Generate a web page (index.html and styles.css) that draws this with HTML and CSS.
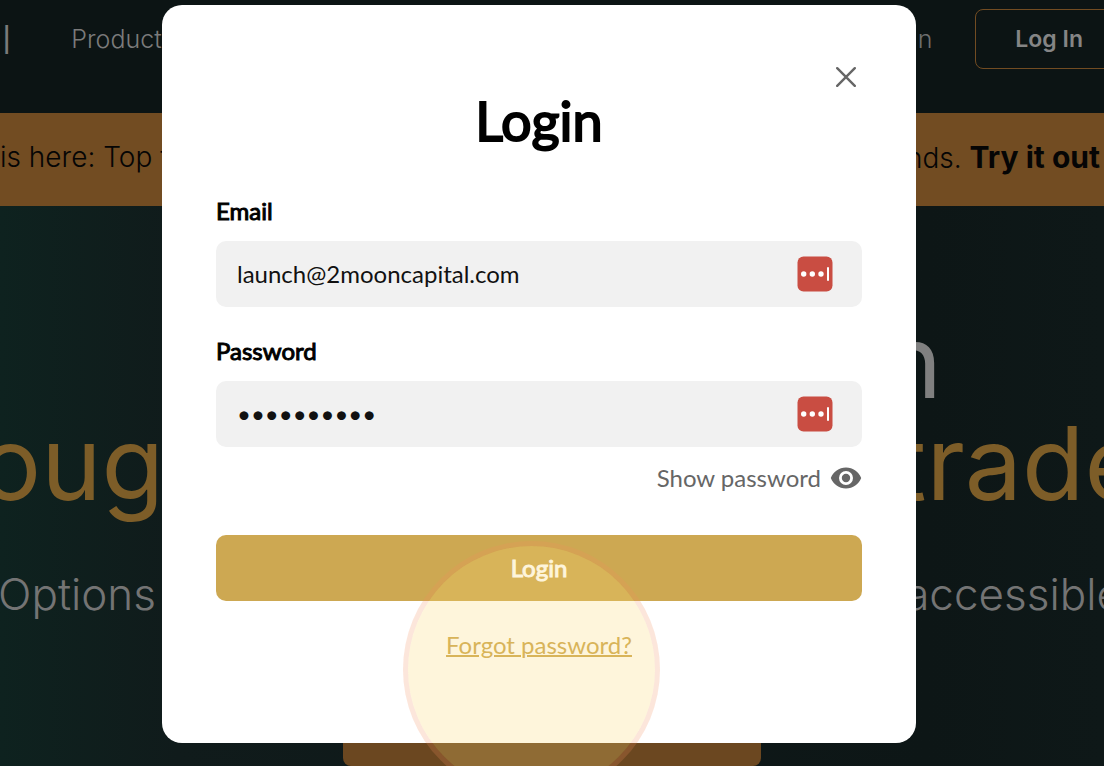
FILE: index.html
```html
<!DOCTYPE html>
<html lang="en">
<head>
<meta charset="utf-8">
<meta name="viewport" content="width=device-width, initial-scale=1">
<title>Login</title>
<link rel="stylesheet" href="styles.css">
</head>
<body>
<div class="page">
  <header class="topbar">
    <div class="topbar-group topbar-left">
      <span class="brand">al</span>
      <a class="nav-link" href="#">Product</a>
    </div>
    <div class="topbar-group topbar-right">
      <a class="nav-link" href="#">n</a>
      <button class="nav-login" type="button">Log In</button>
    </div>
  </header>
  <div class="banner">
    <span>is here: Top t</span>
    <span>nds. <a class="banner-link" href="#">Try it out</a></span>
  </div>
  <main class="hero">
    <div class="hero-line hero-light"><span>n</span></div>
    <div class="hero-line hero-gold"><span>oug</span><span>trade</span></div>
    <div class="hero-sub"><span>Options</span><span>accessible</span></div>
    <div class="hero-cta"></div>
  </main>

  <div class="overlay">
    <section class="dialog" role="dialog" aria-labelledby="dialog-title">
      <button class="close" type="button" aria-label="Close">
        <svg viewBox="0 0 20 20" width="20" height="20"><path d="M1.2 1.2 18.8 18.8M18.8 1.2 1.2 18.8" fill="none" stroke="#666" stroke-width="2.4" stroke-linecap="round"/></svg>
      </button>
      <h1 class="title" id="dialog-title">Login</h1>
      <form class="form">
        <label class="label" for="email">Email</label>
        <div class="field">
          <input class="input" id="email" type="email" value="launch@2mooncapital.com">
          <svg class="vault" viewBox="0 0 36 36" width="36" height="36"><rect x=".5" y=".5" width="35" height="35" rx="6" fill="#c94d42"/><g fill="#fff"><circle cx="6.7" cy="18" r="2.7"/><circle cx="15.3" cy="18" r="2.7"/><circle cx="24" cy="18" r="2.7"/><rect x="30" y="11" width="2" height="14" rx="1"/></g></svg>
        </div>
        <label class="label" for="password">Password</label>
        <div class="field">
          <input class="input" id="password" type="password" value="launchmoon">
          <svg class="vault" viewBox="0 0 36 36" width="36" height="36"><rect x=".5" y=".5" width="35" height="35" rx="6" fill="#c94d42"/><g fill="#fff"><circle cx="6.7" cy="18" r="2.7"/><circle cx="15.3" cy="18" r="2.7"/><circle cx="24" cy="18" r="2.7"/><rect x="30" y="11" width="2" height="14" rx="1"/></g></svg>
        </div>
        <button class="show" type="button">Show password
          <svg viewBox="0 0 32 22" width="32" height="22"><path fill="#666" fill-rule="evenodd" d="M16 .5C9 .5 3.200 4.800.8 11c2.400 6.200 8.200 10.500 15.200 10.500S28.800 17.200 31.200 11C28.800 4.800 23 .5 16 .5ZM16 18a7 7 0 1 1 0-14 7 7 0 0 1 0 14Zm0-2.800a4.200 4.200 0 1 0 0-8.400 4.200 4.200 0 0 0 0 8.400Z"/></svg>
        </button>
        <button class="submit" type="submit">Login</button>
        <a class="forgot" href="#">Forgot password?</a>
      </form>
    </section>
    <div class="spotlight"></div>
  </div>
</div>
</body>
</html>
```
FILE: styles.css
```css
* { box-sizing: border-box; }
body { margin: 0; font-family: Inter, sans-serif; }
button, input { font: inherit; margin: 0; border: 0; }
button { background: none; padding: 0; cursor: pointer; }
a { color: inherit; text-decoration: none; }
svg { display: block; flex: none; }

.page {
  position: relative;
  display: flex;
  flex-direction: column;
  min-height: 100vh;
  overflow: hidden;
  background: #0c1414;
  white-space: nowrap;
}

.topbar {
  display: flex;
  justify-content: space-between;
  align-items: flex-start;
  height: 113px;
  padding-top: 9px;
  color: #7b7b7b;
}
.topbar-group { display: flex; align-items: center; height: 60px; }
.topbar-left { gap: 60px; margin-left: -20px; }
.topbar-right { gap: 43px; margin-right: -19px; }
.brand { font-size: 40px; font-weight: 300; }
.nav-link { font-size: 25px; font-weight: 300; }
.nav-login {
  height: 60px;
  padding: 0 39px;
  border: 1px solid #724c22;
  border-radius: 8px;
  color: #858585;
  font-size: 23px;
  font-weight: 600;
}
.topbar-right .nav-link { color: #6e6e6e; }

.banner {
  display: flex;
  justify-content: space-between;
  align-items: center;
  height: 93px;
  padding: 0 4px 6px 0;
  background: #724c22;
  color: #050505;
  font-size: 28px;
  font-weight: 300;
}
.banner-link { font-size: 30px; font-weight: 700; }

.hero {
  flex: 1;
  display: flex;
  flex-direction: column;
  padding-top: 104px;
  background: linear-gradient(90deg, #0e221f 0, #101b1b 16%, #0d1616 84%, #0e1818 100%);
}
.hero-line {
  display: flex;
  justify-content: space-between;
  line-height: 102px;
  font-size: 102px;
  font-weight: 400;
}
.hero-light { justify-content: flex-end; padding-right: 162px; color: #808080; }
.hero-gold { margin: 0 -40px 0 -20px; color: #7d5d28; }
.hero-sub {
  display: flex;
  justify-content: space-between;
  margin: 50px -18px 0 -2px;
  color: #747474;
  font-size: 44px;
  font-weight: 300;
  line-height: 60px;
}
.hero-cta {
  width: 418px;
  height: 60px;
  margin: auto auto 0;
  border-radius: 0 0 8px 8px;
  background: #6b4720;
}

.overlay {
  position: absolute;
  inset: 0;
  padding: 5px 26px 23px 0;
  font-family: Lato, sans-serif;
  font-size: 24px;
  line-height: 32px;
}
.dialog {
  display: flex;
  flex-direction: column;
  max-width: 754px;
  height: 100%;
  margin: 0 auto;
  padding: 62px 54px 0;
  border-radius: 20px;
  background: #fff;
}
.close { align-self: flex-end; padding: 0 6px; }
.title {
  margin: 0 0 40px;
  font-size: 54px;
  font-weight: 400;
  line-height: 68px;
  text-align: center;
  -webkit-text-stroke: 2px #000;
}
.form { display: flex; flex-direction: column; }
.label { -webkit-text-stroke: 1px #000; }
.field {
  display: flex;
  align-items: center;
  height: 66px;
  margin: 14px 0 28px;
  padding: 0 29px 0 21px;
  border-radius: 10px;
  background: #f1f1f1;
}
.input { flex: 1; min-width: 0; padding: 0; background: none; color: #111; outline: 0; }
.show {
  display: flex;
  align-items: center;
  align-self: flex-end;
  gap: 9px;
  margin-top: -13px;
  color: #666;
}
.submit {
  height: 66px;
  margin: 41px 0 28px;
  border-radius: 10px;
  background: #cda852;
  color: #fff;
  -webkit-text-stroke: 1px #fff;
}
.forgot { align-self: center; color: #cda852; text-decoration: underline; text-decoration-thickness: 2px; }

.spotlight {
  position: absolute;
  top: 541px;
  left: calc(50% - 149px);
  width: 257px;
  height: 257px;
  border: 5px solid rgba(240, 140, 92, .22);
  border-radius: 50%;
  background: rgba(250, 216, 110, .25) padding-box;
  pointer-events: none;
}
```
